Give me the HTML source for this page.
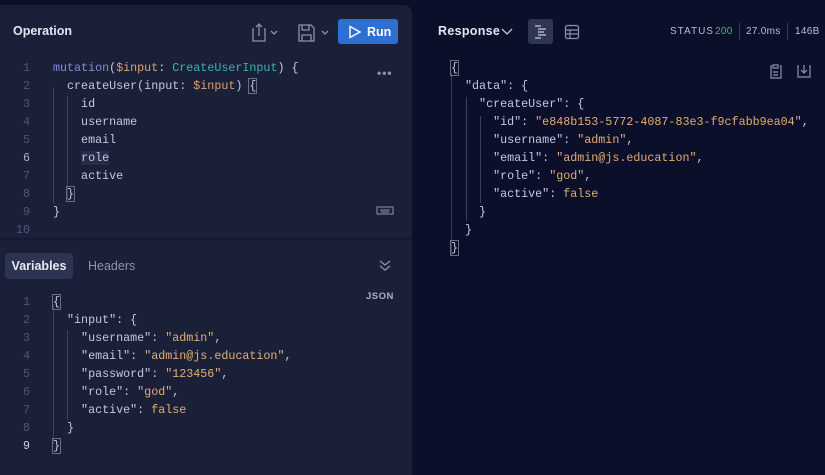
<!DOCTYPE html>
<html><head><style>
*{margin:0;padding:0;box-sizing:border-box}
body{width:825px;height:469px;background:#0b0f29;overflow:hidden;position:relative;font-family:"Liberation Sans",sans-serif}
.lp{position:absolute;left:0;top:5px;width:412px;height:470px;background:#1b2039;border-radius:0 8px 0 0}
.div{position:absolute;left:0;top:238px;width:412px;height:2px;background:#141830}
.mono{font-family:"Liberation Mono",monospace;font-size:11.7px;white-space:pre;position:absolute;line-height:18px}
.ln{color:#4f5675;text-align:right;width:30px;left:0}
.t{color:#c3c9de}
.s{color:#dfae72}
.k{color:#8389db}
.v{color:#d9a36a}
.ty{color:#35b5b0}
.guide{position:absolute;width:1px;background:#3a4060}
.box{outline:1px solid #667080}
.h{position:absolute;font-size:12.5px;font-weight:bold;color:#e3e6f0}
.st{position:absolute;top:26px;font-size:10px;color:#b8bed2;letter-spacing:.6px}
</style></head><body>
<div class="lp"></div>
<div class="div"></div>
<div class="h" style="left:13px;top:24px">Operation</div>
<svg style="position:absolute;left:250px;top:22px" width="90" height="22" fill="none" stroke="#8d93ad" stroke-width="1.3">
<path d="M4 7h-1v12h12v-12h-1M9 14V2M6 5l3-3 3 3"/><path d="M21 9l3 3 3-3"/>
<path d="M49 3h12l3 3v13h-15z M52 3v5h7V3 M52 19v-6h9v6"/><path d="M72 9l3 3 3-3"/>
</svg>
<div style="position:absolute;left:338px;top:19px;width:60px;height:25px;background:#2d6fd2;border-radius:3px"></div>
<div style="position:absolute;left:367px;top:25px;color:#fff;font-size:12.5px;font-weight:bold">Run</div>
<svg style="position:absolute;left:348px;top:25px" width="14" height="14" fill="none" stroke="#fff" stroke-width="1.4"><path d="M2 1.5l10 5.5-10 5.5z"/></svg>
<div style="position:absolute;left:377px;top:66px;color:#8d93ad;font-size:12px;letter-spacing:1px;font-weight:bold">•••</div>
<svg style="position:absolute;left:376px;top:206px" width="18" height="9" fill="none" stroke="#8d93ad"><rect x="1" y="1" width="16" height="7"/><path d="M4 4h10M5 6h8"/></svg>
<div class="mono ln" style="top:59px">1
2
3
4
5
<span style="color:#aab0c6">6</span>
7
8
9
10</div>
<div class="guide" style="left:53px;top:87px;height:117px"></div>
<div class="guide" style="left:67px;top:96px;height:104px"></div>
<div class="mono t" style="left:53px;top:59px"><span class="k">mutation</span>(<span class="v">$input</span>: <span class="ty">CreateUserInput</span>) {
  createUser(input: <span class="v">$input</span>) <span class="box">{</span>
    id
    username
    email
    <span style="background:#272d48">role</span>
    active
  <span class="box">}</span>
}
</div>
<div style="position:absolute;left:5px;top:253px;width:68px;height:26px;background:#2d3452;border-radius:4px;color:#e6e9f2;font-size:12.5px;font-weight:bold;line-height:26px;text-align:center">Variables</div>
<div style="position:absolute;left:88px;top:259px;color:#8d93ad;font-size:12.5px">Headers</div>
<svg style="position:absolute;left:378px;top:258px" width="14" height="14" fill="none" stroke="#8d93ad" stroke-width="1.3"><path d="M2 3l5 4 5-4M2 8l5 4 5-4"/></svg>
<div style="position:absolute;left:366px;top:291px;color:#aab0c6;font-size:9.5px;font-weight:bold;letter-spacing:.5px">JSON</div>
<div class="mono ln" style="top:293px">1
2
3
4
5
6
7
8
<span style="color:#d0d4e4">9</span></div>
<div class="guide" style="left:53px;top:304px;height:140px"></div>
<div class="guide" style="left:67px;top:330px;height:90px"></div>
<div class="mono t" style="left:53px;top:293px"><span class="box">{</span>
  "input": {
    "username": <span class="s">"admin"</span>,
    "email": <span class="s">"admin@js.education"</span>,
    "password": <span class="s">"123456"</span>,
    "role": <span class="s">"god"</span>,
    "active": <span class="s">false</span>
  }
<span class="box">}</span></div>
<div class="h" style="left:438px;top:24px;letter-spacing:.3px">Response</div>
<svg style="position:absolute;left:501px;top:27px" width="12" height="10" fill="none" stroke="#c3c9de" stroke-width="1.3"><path d="M1 2l5 5 5-5"/></svg>
<div style="position:absolute;left:528px;top:19px;width:25px;height:25px;background:#2f3650;border-radius:3px"></div>
<svg style="position:absolute;left:533px;top:24px" width="16" height="16" stroke="#c3c9de" stroke-width="1.2"><path d="M2 2h6M5 5h8M5 8h6M5 11h8M2 14h6"/></svg>
<svg style="position:absolute;left:564px;top:24px" width="16" height="16" fill="none" stroke="#8d93ad" stroke-width="1.2"><rect x="1.5" y="1.5" width="13" height="13" rx="2"/><path d="M1.5 6h13M1.5 10h13M6 6v8.5"/></svg>
<div class="st" style="left:670px;letter-spacing:1px">STATUS</div>
<div class="st" style="left:715px;color:#4fb07a;letter-spacing:.3px">200</div>
<div style="position:absolute;left:739px;top:23px;width:1px;height:17px;background:#333a55"></div>
<div class="st" style="left:746px;letter-spacing:.3px">27.0ms</div>
<div style="position:absolute;left:787px;top:23px;width:1px;height:17px;background:#333a55"></div>
<div class="st" style="left:795px;letter-spacing:.3px">146B</div>
<svg style="position:absolute;left:768px;top:63px" width="45" height="18" fill="none" stroke="#8d93ad" stroke-width="1.2"><path d="M4 3h-1v12h10v-12h-1M5 2h5v3h-5z M5 9h5M5 12h5"/><path d="M31 3h-1v11h12v-11h-1M36 2v8M33 7l3 3 3-3"/></svg>
<div class="guide" style="left:451px;top:73px;height:182px;background:#3a4060"></div>
<div class="guide" style="left:466px;top:97px;height:124px"></div>
<div class="guide" style="left:480px;top:116px;height:87px"></div>
<div class="mono t" style="left:451px;top:59px"><span class="box">{</span>
  "data": {
    "createUser": {
      "id": <span class="s">"e848b153-5772-4087-83e3-f9cfabb9ea04"</span>,
      "username": <span class="s">"admin"</span>,
      "email": <span class="s">"admin@js.education"</span>,
      "role": <span class="s">"god"</span>,
      "active": <span class="s">false</span>
    }
  }
<span class="box">}</span></div>
</body></html>
